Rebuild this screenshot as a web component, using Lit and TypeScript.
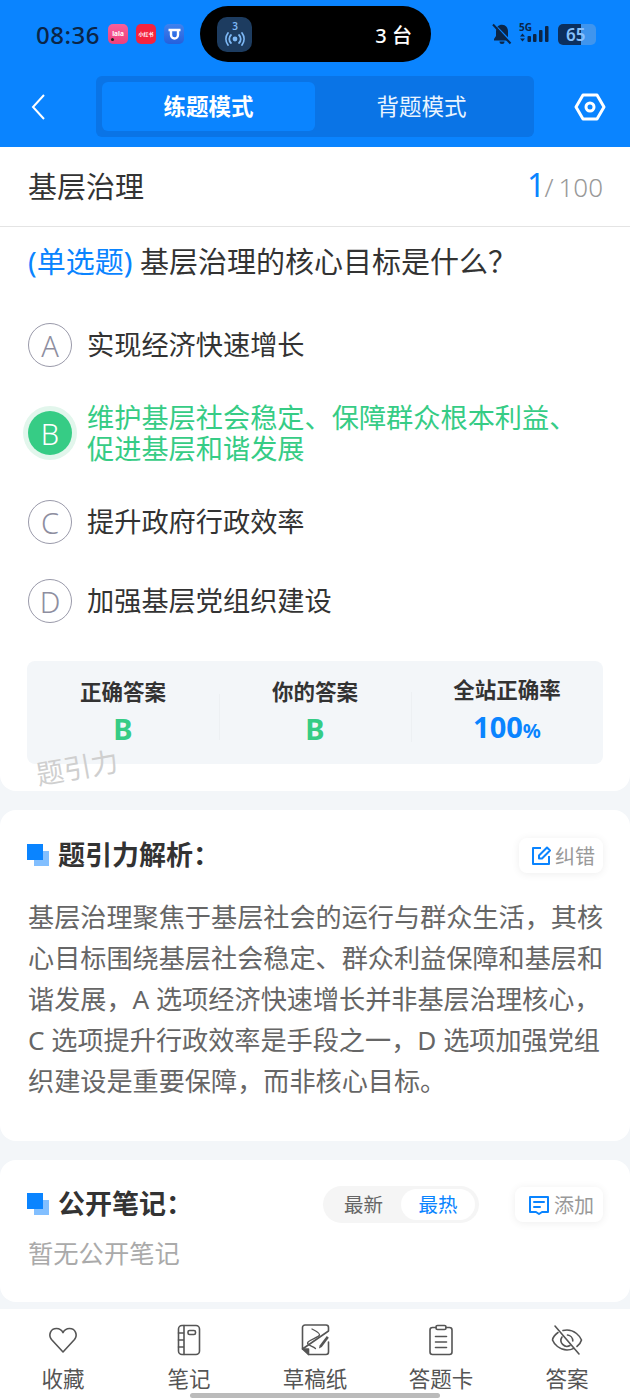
import { LitElement, html, css, svg } from "lit";
import { customElement } from "lit/decorators.js";

const opts = [
  { k: "A", t: html`实现经济快速增长` },
  { k: "B", t: html`维护基层社会稳定、保障群众根本利益、<br />促进基层和谐发展`, ok: true },
  { k: "C", t: html`提升政府行政效率` },
  { k: "D", t: html`加强基层党组织建设` },
];

const ic = (w: number, body: unknown, vb = "0 0 32 32") =>
  html`<svg width=${w} height=${w} viewBox=${vb} fill="none" stroke="#555" stroke-width="1.6" stroke-linecap="round" stroke-linejoin="round">${body}</svg>`;

const tabs = [
  { l: "收藏", i: ic(32, svg`<path d="M16 28 L4.500 15.500 C1 11 3.500 4.500 9.500 4.500 C12.500 4.500 14.800 6.200 16 8.600 C17.200 6.200 19.500 4.500 22.500 4.500 C28.500 4.500 31 11 27.500 15.500 Z"/>`) },
  { l: "笔记", i: ic(32, svg`<rect x="5.500" y="1.500" width="21" height="29" rx="3.500"/><path d="M11 1.500V30.500M5.500 9H11M5.500 16H11M5.500 23H11"/><rect x="15" y="6.500" width="7.500" height="4" rx="1.500"/>`) },
  { l: "草稿纸", i: ic(32, svg`<path d="M9.500 30.500 H27 a2.500 2.500 0 0 0 2.500 -2.500 V18 M29.500 7 V3.500 a2.500 2.500 0 0 0 -2.500 -2.500 H6 A2.500 2.500 0 0 0 3.500 3.500 V25 Z"/><path d="M3.500 25 H9.500 V30.500 Z" fill="#555"/><path d="M13 5 C16 6.500 21 9 20.500 11 C20 13.500 9 16 8.500 19 C8.500 21.500 14 22 16.500 24.500" stroke-width="1.300"/><path d="M20 24.500 L20.600 21.500 L27.800 12 L29.800 13.700 L22.800 23 Z" fill="#555" stroke="none"/>`) },
  { l: "答题卡", i: ic(32, svg`<path d="M11 3.500 H7.500 A2.500 2.500 0 0 0 5 6 V28 A2.500 2.500 0 0 0 7.500 30.500 H24.500 A2.500 2.500 0 0 0 27 28 V6 A2.500 2.500 0 0 0 24.500 3.500 H21"/><rect x="11" y="1.500" width="10" height="4" rx="1.500"/><path d="M10.500 12.500H21.500M10.500 18H21.500M10.500 23.500H21.500"/>`) },
  { l: "答案", i: ic(32, svg`<path d="M7 8.500 C3.800 10.800 1.800 13.600 1.500 16 C3 20 8.500 26 16 26 C18.500 26 20.800 25.400 22.800 24.400 M12 6.500 C13.200 6.200 14.600 6 16 6 C23.500 6 29 12 30.500 16 C30 18 28.400 20.400 26 22.400"/><path d="M11 13 A6 6 0 0 0 19 21.500 M16.500 11 A6 6 0 0 1 21.800 17"/><path d="M4 2 L28 30"/>`) },
];

@customElement("app-root")
export class AppRoot extends LitElement {
  static styles = css`
    :host { display: block; width: 630px; height: 1400px; overflow: hidden; position: relative; background: #f3f6f9; font-family: "Noto Sans", "Noto Sans CJK SC", sans-serif; color: #333; }
    * { box-sizing: border-box; }
    .head { height: 147px; background: #0a84ff; display: flex; flex-direction: column; }
    .status { height: 76px; padding: 0 34px 8px 36px; display: flex; align-items: center; }
    .time { font-size: 24px; font-weight: 500; color: #0b2547; width: 72px; letter-spacing: .5px; }
    .apps { display: flex; gap: 8px; width: 92px; }
    .app { width: 20px; height: 20px; border-radius: 5px; color: #fff; font-size: 5px; font-weight: 700; line-height: 6px; display: flex; align-items: center; justify-content: center; overflow: hidden; white-space: nowrap; position: relative; }
    .lala { background: linear-gradient(#f8609a, #ef3f7c); font-size: 6.500px; }
    .lala i { position: absolute; left: 3px; bottom: 3px; width: 3px; height: 3px; border-radius: 50%; background: #222; }
    .xhs { background: #f4233f; }
    .blu { background: linear-gradient(#3f82ee, #2560dc); }
    .island { width: 231px; height: 56px; border-radius: 28px; background: #000; display: flex; align-items: center; justify-content: space-between; padding: 0 19px 0 17px; color: #fff; font-size: 20px; font-weight: 500; }
    .isq { width: 35px; height: 35px; border-radius: 10px; background: #1d3c60; display: flex; align-items: center; justify-content: center; }
    .sys { margin-left: auto; display: flex; align-items: center; gap: 7px; }
    .batt { width: 38px; height: 21px; border-radius: 5px; background: #3f95ee; position: relative; overflow: hidden; color: #86c0fb; font-size: 17px; font-weight: 600; line-height: 21px; padding-left: 8px; }
    .battfill { position: absolute; left: 0; top: 0; bottom: 0; width: 61%; background: #0b2f5e; }
    .batt span { position: relative; }
    .nav { height: 71px; display: flex; align-items: flex-start; padding: 0 24px 0 30px; }
    .back { width: 66px; height: 61px; display: flex; align-items: center; }
    .seg { width: 438px; height: 61px; background: #0a74e6; border-radius: 6px; padding: 6px; display: grid; grid-template-columns: 213px 1fr; }
    .seg div { display: flex; align-items: center; justify-content: center; color: #e9f4ff; font-size: 22.500px; border-radius: 6px; padding-bottom: 3px; }
    .seg .on { background: #0a84ff; color: #fff; font-weight: 700; }
    .gear { margin-left: auto; height: 61px; display: flex; align-items: center; }

    .card1 { background: #fff; height: 644px; border-radius: 0 0 16px 16px; position: relative; }
    .titlerow { height: 80px; border-bottom: 1px solid #e4e4e4; display: flex; align-items: center; justify-content: space-between; padding: 0 27px 4px 28px; font-size: 29px; }
    .count { font-size: 26px; color: #999; display: flex; align-items: baseline; font-weight: 300; }
    .count b { font-weight: 400; font-size: 32px; color: #0a84ff; margin-right: -1px; }
    .count i { font-style: normal; margin-right: 5px; }
    .q { padding: 14px 28px 0; font-size: 29px; line-height: 42px; height: 80px; white-space: nowrap; }
    .q span { color: #0a84ff; }
    .opt { display: flex; align-items: center; gap: 15px; padding: 0 28px; font-size: 27.200px; line-height: 31px; color: #333; }
    .otext { padding-bottom: 1px; }
    .optwrap { display: flex; flex-direction: column; }
    .o0 { height: 76px; }
    .o1 { height: 100px; }
    .o2 { height: 78px; }
    .o3 { height: 80px; }
    .circ { flex: none; width: 44px; height: 44px; border-radius: 50%; border: 1.500px solid #9a9aaa; color: #8e8ea0; font-size: 29px; font-weight: 300; display: flex; align-items: center; justify-content: center; }
    .ok { color: #36cc85; }
    .ok .circ { background: #36cc85; border: none; color: #fff; box-shadow: 0 0 0 5px #e2f6ec; }
    .stats { margin: 20px 27px 0; height: 103px; background: #f3f6f9; border-radius: 8px; display: grid; grid-template-columns: repeat(3, 1fr); align-items: center; }
    .st { text-align: center; position: relative; }
    .st + .st::before { content: ""; position: absolute; left: 0; top: 16px; bottom: 8px; width: 1px; background: #edf0f3; }
    .lbl { font-size: 21.500px; font-weight: 700; color: #333; line-height: 32px; margin-top: -2px; }
    .val { font-size: 29px; font-weight: 700; color: #36cc85; line-height: 38px; margin-top: 2px; }
    .val.blue { color: #0a84ff; }
    .val small { font-size: 20px; }
    .mark { position: absolute; left: 36px; top: 604px; font-size: 27.500px; color: #cfcfcf; transform: rotate(-10deg); line-height: 34px; }

    .card { background: #fff; border-radius: 16px; margin-top: 19px; padding: 0 27px 0 28px; }
    .c2 { height: 331px; padding-top: 28px; }
    .c3 { height: 142px; padding-top: 27px; }
    .shead { display: flex; align-items: center; height: 35px; }
    .sq { position: relative; width: 30px; height: 24px; flex: none; margin: 1px 0 0 -1px; }
    .sq i:first-child { position: absolute; left: 0; top: 0; width: 16px; height: 16px; background: #0a84ff; z-index: 1; }
    .sq i:last-child { position: absolute; left: 7px; top: 7px; width: 15px; height: 15px; background: #82bfff; }
    .stitle { font-size: 27px; font-weight: 700; color: #333; margin: -4px 0 0 1px; }
    .btn { margin-left: auto; height: 35px; padding: 0 8px 0 11px; display: flex; align-items: center; gap: 3px; background: #fff; border-radius: 8px; box-shadow: 0 1px 8px rgba(0,0,0,.07); font-size: 20px; color: #999; }
    .body { margin: 24px -4px 0 0; font-size: 26.150px; line-height: 41px; color: #666; }
    .tog { margin-left: auto; width: 156px; height: 37px; border-radius: 19px; background: #f5f5f5; padding: 3px 4px 3px 3px; display: flex; align-items: center; font-size: 19.500px; color: #666; }
    .tog span { flex: 1; text-align: center; line-height: 31px; }
    .tog .on { background: #fff; color: #0a84ff; border-radius: 16px; flex: none; width: 74px; }
    .c3 .btn { margin-left: 36px; padding: 0 8px 0 12px; width: 88px; }
    .empty { margin-top: 13px; font-size: 25.300px; line-height: 36px; color: #aaa; }

    .bar { position: absolute; left: 0; right: 0; top: 1309px; height: 91px; background: #fff; display: grid; grid-template-columns: repeat(5, 126px); }
    .tab { display: flex; flex-direction: column; align-items: center; padding-top: 15px; font-size: 21.500px; color: #555; }
    .tab span { line-height: 30px; margin-top: 8px; }
    .home { position: absolute; left: 190px; top: 1393px; width: 250px; height: 5px; background: #bbb; border-radius: 3px; }
  `;

  render() {
    return html`
      <div class="head">
        <div class="status">
          <div class="time">08:36</div>
          <div class="apps">
            <div class="app lala">lala<i></i></div>
            <div class="app xhs">小红书</div>
            <div class="app blu">
              <svg width="15" height="15" viewBox="0 0 15 15" fill="none" stroke="#fff" stroke-width="2.400"><path d="M4 2v6a3.500 3.500 0 0 0 7 0V2M1.500 3h12"/></svg>
            </div>
          </div>
          <div class="island">
            <div class="isq">
              <svg width="30" height="30" viewBox="0 0 30 30" fill="none" stroke="#7db8f5" stroke-width="1.800" stroke-linecap="round">
                <circle cx="15" cy="20" r="2.400" fill="#7db8f5" stroke="none"/>
                <path d="M11 16a5.500 5.500 0 0 0 0 8M19 16a5.500 5.500 0 0 1 0 8M8 14a10 10 0 0 0 0 12M22 14a10 10 0 0 1 0 12"/>
                <text x="15" y="11" text-anchor="middle" font-size="10" font-weight="600" fill="#7db8f5" stroke="none" font-family="Noto Sans">3</text>
              </svg>
            </div>
            <span>3 台</span>
          </div>
          <div class="sys">
            <svg width="20" height="22" viewBox="0 0 20 22" fill="#0b2547"><path d="M10 2.500c-3.800 0-6 2.800-6 6.500v4L2 16v1.500h14.500L3.500 4 6 4.200C7 3 8.400 2.500 10 2.500z"/><path d="M5.500 3.500C6.800 2.300 8.300 1.800 10 1.800c3.800 0 6 3 6 7v5.500z"/><path d="M7.500 18.500h5a2.500 2.500 0 0 1-5 0z"/><path d="M1 1.500 18.500 20.500" stroke="#0b2547" stroke-width="2" fill="none"/></svg>
            <svg width="32" height="26" viewBox="0 -1 32 26" fill="#0b2547">
              <text x="0" y="9" font-size="10" font-weight="700" fill="#0b2547" font-family="Noto Sans">5G</text>
              <path d="M1 14.500l2.500-3 2.500 3zM1 16.500l2.500 3 2.500-3z"/>
              <rect x="8.500" y="14" width="3.500" height="6" rx="1"/><rect x="14" y="12" width="3.500" height="8" rx="1"/><rect x="20" y="8" width="3.500" height="12" rx="1"/><rect x="26" y="4" width="3.500" height="16" rx="1"/>
            </svg>
            <div class="batt"><div class="battfill"></div><span>65</span></div>
          </div>
        </div>
        <div class="nav">
          <div class="back"><svg width="16" height="28" viewBox="0 0 16 28" fill="none" stroke="#fff" stroke-width="2"><path d="M14 2 L3 14 L14 26"/></svg></div>
          <div class="seg"><div class="on">练题模式</div><div>背题模式</div></div>
          <div class="gear"><svg width="32" height="28" viewBox="0 0 32 28" fill="none" stroke="#fff" stroke-width="3" stroke-linejoin="round"><path d="M9 2h14l7 12-7 12H9L2 14z"/><circle cx="16" cy="14" r="4"/></svg></div>
        </div>
      </div>

      <div class="card1">
        <div class="titlerow"><div>基层治理</div><div class="count"><b>1</b><i>/</i>100</div></div>
        <div class="q"><span>(单选题)</span> 基层治理的核心目标是什么？</div>
        <div class="optwrap">
          ${opts.map((o, i) => html`<div class="opt o${i} ${o.ok ? "ok" : ""}"><div class="circ">${o.k}</div><div class="otext">${o.t}</div></div>`)}
        </div>
        <div class="stats">
          <div class="st"><div class="lbl">正确答案</div><div class="val">B</div></div>
          <div class="st"><div class="lbl">你的答案</div><div class="val">B</div></div>
          <div class="st"><div class="lbl">全站正确率</div><div class="val blue">100<small>%</small></div></div>
        </div>
        <div class="mark">题引力</div>
      </div>

      <div class="card c2">
        <div class="shead">
          <div class="sq"><i></i><i></i></div>
          <div class="stitle">题引力解析：</div>
          <div class="btn">
            <svg width="22" height="22" viewBox="0 0 22 22" fill="none" stroke="#0a84ff" stroke-width="2" stroke-linejoin="round"><path d="M11 3H3v16h16v-8"/><path d="M9 10.500 17 2.500l3 3-8 8H9z"/></svg>
            纠错
          </div>
        </div>
        <div class="body">基层治理聚焦于基层社会的运行与群众生活，其核心目标围绕基层社会稳定、群众利益保障和基层和谐发展，A 选项经济快速增长并非基层治理核心，C 选项提升行政效率是手段之一，D 选项加强党组织建设是重要保障，而非核心目标。</div>
      </div>

      <div class="card c3">
        <div class="shead">
          <div class="sq"><i></i><i></i></div>
          <div class="stitle">公开笔记：</div>
          <div class="tog"><span>最新</span><span class="on">最热</span></div>
          <div class="btn">
            <svg width="24" height="24" viewBox="0 0 24 24" fill="none" stroke="#0a84ff" stroke-width="2" stroke-linejoin="round" stroke-linecap="round"><path d="M3 4h18v15h-6l-3 2-3-2H3z"/><path d="M7 9h10M7 14h6"/></svg>
            添加
          </div>
        </div>
        <div class="empty">暂无公开笔记</div>
      </div>

      <div class="bar">
        ${tabs.map((t) => html`<div class="tab">${t.i}<span>${t.l}</span></div>`)}
      </div>
      <div class="home"></div>
    `;
  }
}
